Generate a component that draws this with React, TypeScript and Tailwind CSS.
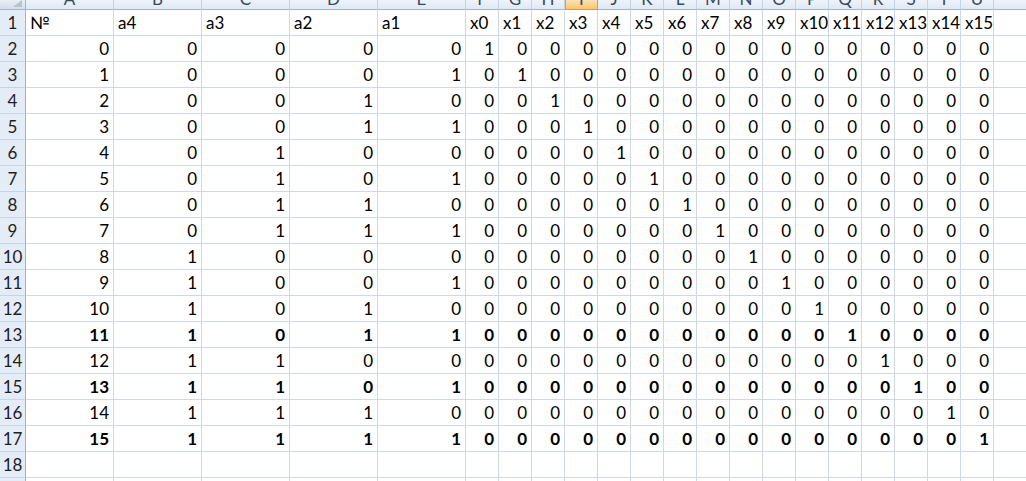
import React from 'react';

const letters = ['A', 'B', 'C', 'D', 'E', 'F', 'G', 'H', 'I', 'J', 'K', 'L', 'M', 'N', 'O', 'P', 'Q', 'R', 'S', 'T', 'U', 'V'];
const headRow = ['№', 'a4', 'a3', 'a2', 'a1', ...Array.from({ length: 16 }, (_, j) => `x${j}`), ''];
const boldRows = [11, 13, 15];

const cell = 'h-[26px] border-r border-b border-[#d0d7e5] flex items-center overflow-hidden whitespace-nowrap';

function RowHead({ n }: { n: number }) {
  return (
    <div className="h-[26px] bg-[#e4ecf7] border-r border-r-[#9eb6ce] border-b border-b-[#c5d3e3] flex items-center justify-center text-[#1f1f1f]">
      {n}
    </div>
  );
}

function ColHead({ l }: { l: string }) {
  const sel = l === 'I';
  return (
    <div
      className={`h-[10px] overflow-hidden flex items-end justify-center border-b ${
        sel
          ? 'bg-gradient-to-b from-[#fbe2b4] to-[#f6c66f] border-r border-r-[#f29536] border-l border-l-[#f29536] border-b-[#f29536]'
          : 'bg-gradient-to-b from-[#eef3fa] to-[#dfe8f4] border-r border-r-[#c5d3e3] border-b-[#9eb6ce]'
      }`}
    >
      <span className="leading-none mb-[2px] text-[#3b4a5a]">{l}</span>
    </div>
  );
}

export default function App() {
  const rows = Array.from({ length: 16 }, (_, i) => {
    const bits = [8, 4, 2, 1].map((b) => ((i & b) ? 1 : 0));
    const onehot = Array.from({ length: 16 }, (_, j) => (j === i ? 1 : 0));
    return [i, ...bits, ...onehot];
  });

  return (
    <div
      className="w-[1026px] h-[481px] overflow-hidden bg-white text-[17px] text-black"
      style={{ fontFamily: 'Lato, "Open Sans", sans-serif' }}
    >
      <div className="grid grid-cols-[26px_repeat(5,88px)_repeat(16,33px)_88px] w-max">
        {/* corner + column letters */}
        <div className="h-[10px] bg-gradient-to-b from-[#e9eef5] to-[#d5dde8] border-r border-r-[#9eb6ce] border-b border-b-[#9eb6ce] flex items-end justify-end overflow-hidden">
          <div className="w-0 h-0 border-l-[9px] border-l-transparent border-b-[7px] border-b-[#b4c2d2] mr-[3px] mb-[2px]" />
        </div>
        {letters.map((l) => (
          <ColHead key={l} l={l} />
        ))}

        {/* row 1: titles */}
        <RowHead n={1} />
        {headRow.map((t, k) => (
          <div key={k} className={`${cell} pl-[4px]`}>
            {t}
          </div>
        ))}

        {/* rows 2..17 */}
        {rows.map((r, i) => (
          <React.Fragment key={i}>
            <RowHead n={i + 2} />
            {r.map((v, k) => (
              <div key={k} className={`${cell} justify-end pr-[4px] ${boldRows.includes(i) ? 'font-bold' : ''}`}>
                {v}
              </div>
            ))}
            <div className={cell} />
          </React.Fragment>
        ))}

        {/* empty rows */}
        {[18, 19].map((n) => (
          <React.Fragment key={n}>
            <RowHead n={n} />
            {letters.map((l) => (
              <div key={l} className={cell} />
            ))}
          </React.Fragment>
        ))}
      </div>
    </div>
  );
}
